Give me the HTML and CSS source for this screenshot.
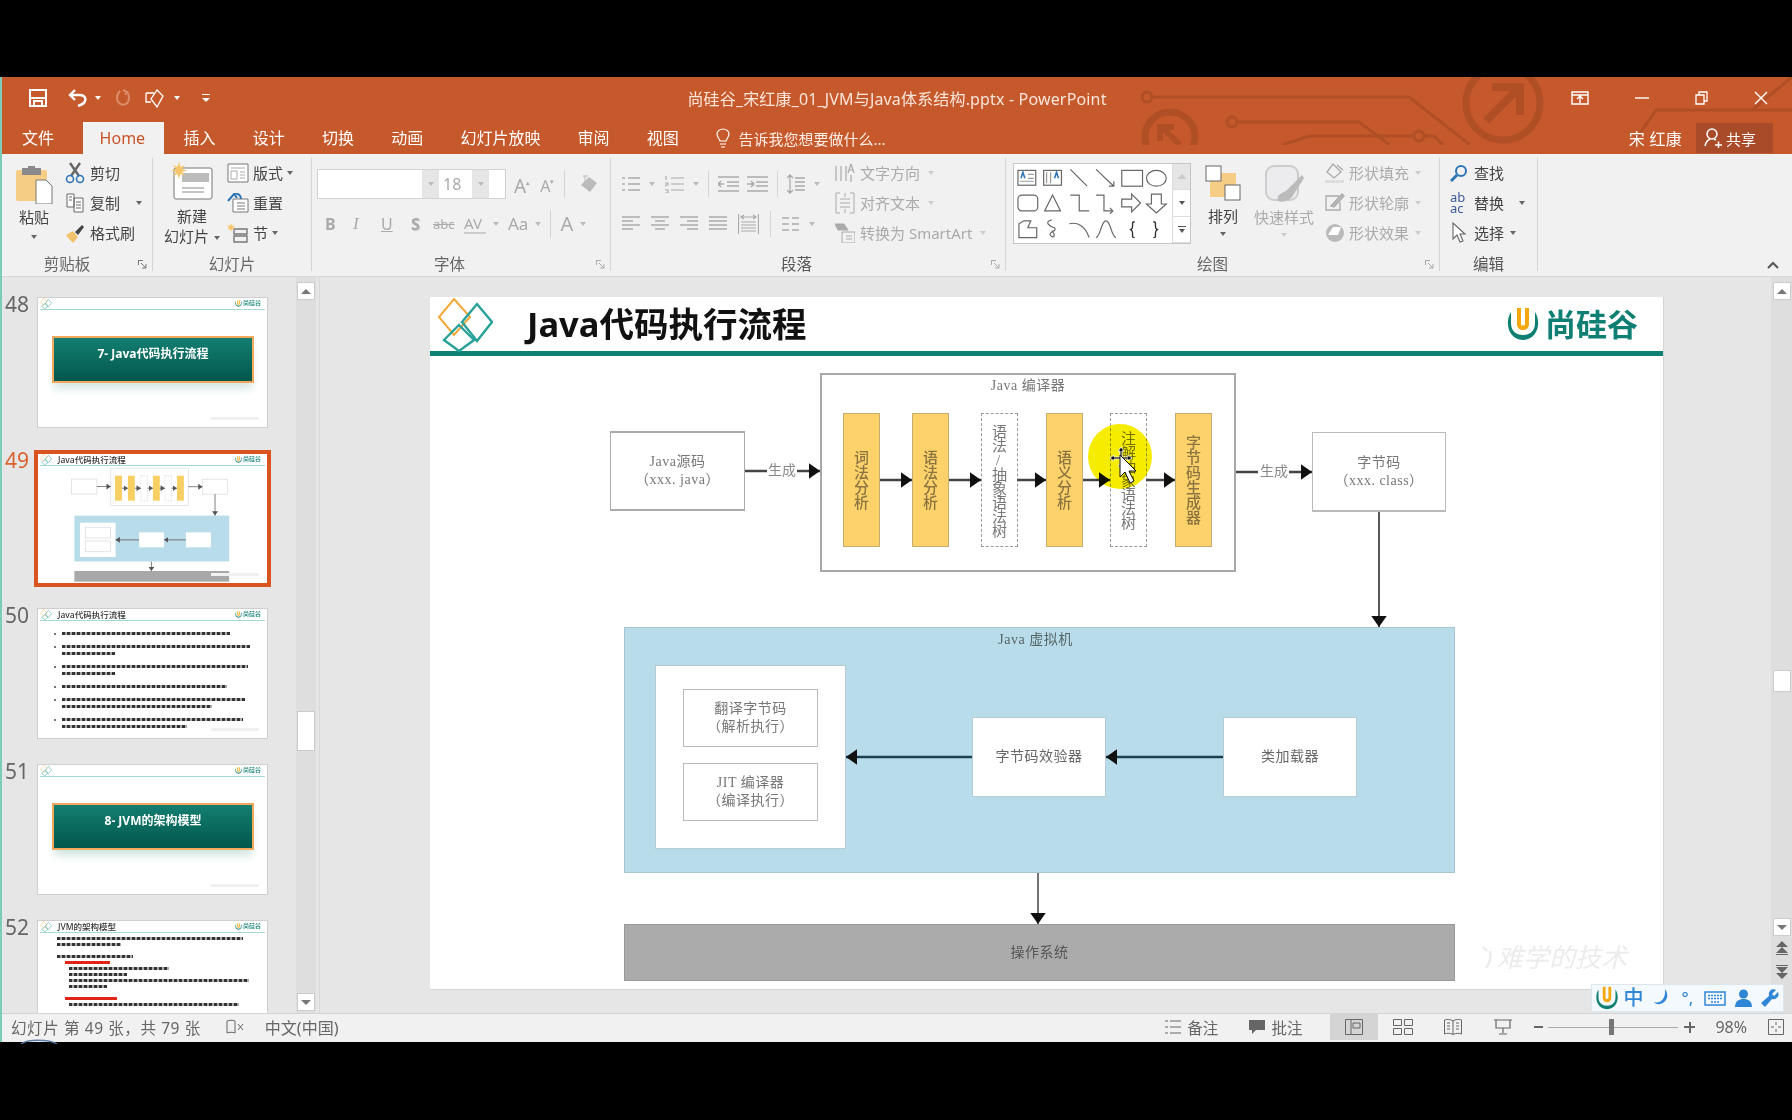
FILE: index.html
```html
<!doctype html>
<html lang="zh-CN">
<head>
<meta charset="utf-8">
<title>尚硅谷_宋红康_01_JVM与Java体系结构.pptx - PowerPoint</title>
<link rel="stylesheet" href="styles.css">
</head>
<body>
<svg class="defs">
	<symbol id="diamonds" viewBox="0 0 56 54">
		<path d="M17 1 L33 19 L17 37 L2 19 Z" fill="none" stroke="#f2a838" stroke-width="2"/>
		<path d="M40 6 L55 24 L40 43 L25 24 Z" fill="none" stroke="#2aa198" stroke-width="2.4"/>
		<path d="M22 27 L37 42 L22 53 L7 42 Z" fill="none" stroke="#2aa198" stroke-width="2.4"/>
	</symbol>
	<symbol id="ulogo" viewBox="0 0 34 34">
		<path d="M5 5 C-1 14 1 32 17 33 C33 32 35 14 29 5 L29 16 C29 24 24 28 17 28 C10 28 5 24 5 16 Z" fill="#0e7f72"/>
		<path d="M11 1 H15 V17 C15 19 19 19 19 17 V1 H23 V17 C23 25 11 25 11 17 Z" fill="#f5a70f"/>
	</symbol>
	<marker id="head" viewBox="0 0 10 14" refX="10" refY="7" markerUnits="userSpaceOnUse" markerWidth="11" markerHeight="16" orient="auto"><path d="M0 0 L10 7 L0 14 Z" fill="#111"/></marker>
	<marker id="mini" viewBox="0 0 10 14" refX="10" refY="7" markerUnits="userSpaceOnUse" markerWidth="24" markerHeight="32" orient="auto"><path d="M0 0 L10 7 L0 14 Z" fill="#555"/></marker>
</svg>

<div class="app">
	<header class="head">
		<svg class="circuit" width="1790" height="68" viewBox="0 0 1790 68" fill="none" stroke="#b04f26" stroke-width="3">
			<circle cx="1145" cy="20" r="5"/><path d="M1150 20 H1407 L1468 68"/>
			<circle cx="1168" cy="60" r="25" stroke-width="7"/><path d="M1178 68 L1160 50 M1158 64 V50 H1172" stroke-width="6"/>
			<circle cx="1230" cy="45" r="5"/><path d="M1235 45 H1357 L1388 68"/>
			<circle cx="1417" cy="59" r="5"/><path d="M1280 68 L1308 59 H1412 M1422 59 H1432 L1441 68"/>
			<circle cx="1501" cy="26" r="37" stroke-width="7"/><path d="M1484 44 L1516 12 M1490 10 H1518 V38" stroke-width="8"/>
			<path d="M1630 68 L1654 33 H1790 M1750 33 L1790 0"/>
		</svg>
		<div class="titlebar">
			<div class="qat">
				<svg class="q-save" width="20" height="20" viewBox="0 0 20 20" fill="none" stroke="#fff" stroke-width="2"><path d="M2 2 H18 V18 H2 Z M2 10 H18 M6 18 V13 H14 V18"/></svg>
				<svg class="q-undo" width="19" height="18" viewBox="0 0 19 18" fill="none" stroke="#fff" stroke-width="2.4"><path d="M7 1 L2 6 L7 11 M2 6 H12 C17 6 18 10 17 12 C16 15 13 16 10 17"/></svg>
				<i class="caret light"></i>
				<svg class="q-redo" width="16" height="18" viewBox="0 0 16 18" fill="none" stroke="#dc8c68" stroke-width="2"><path d="M11 2 C15 5 15 12 11 15 C7 17 2 14 2 9 C2 6 3 4 5 2 M8 1 L12 3 L10 6"/></svg>
				<svg class="q-touch" width="21" height="20" viewBox="0 0 21 20" fill="none" stroke="#fff" stroke-width="1.3"><path d="M1 5 H9 M1 5 V14 H6 M12 2 L18 8 L12 19 L6 11 Z"/></svg>
				<i class="caret light"></i>
				<svg class="q-more" width="8" height="10" viewBox="0 0 8 10" fill="#fff"><path d="M0 1 H8 V2 H0 Z M0 5 H8 L4 9 Z"/></svg>
			</div>
			<div class="doc-title">尚硅谷_宋红康_01_JVM与Java体系结构.pptx - PowerPoint</div>
			<div class="winctl">
				<svg width="18" height="14" viewBox="0 0 18 14" fill="none" stroke="#fff" stroke-width="1.4"><path d="M1 1 H17 V13 H1 Z M1 4 H17 M9 12 V6 M6 8 L9 5 L12 8"/></svg>
				<svg width="14" height="14" viewBox="0 0 14 14" stroke="#fff" stroke-width="1.4"><path d="M0 7 H14"/></svg>
				<svg width="13" height="14" viewBox="0 0 13 14" fill="none" stroke="#fff" stroke-width="1.3"><path d="M1 4 H9 V13 H1 Z M4 4 V1 H12 V10 H9"/></svg>
				<svg width="14" height="14" viewBox="0 0 14 14" stroke="#fff" stroke-width="1.4"><path d="M1 1 L13 13 M13 1 L1 13"/></svg>
			</div>
		</div>
		<nav class="tabs">
			<span class="tab">文件</span>
			<span class="tab tab-on">Home</span>
			<span class="tab">插入</span>
			<span class="tab">设计</span>
			<span class="tab">切换</span>
			<span class="tab">动画</span>
			<span class="tab">幻灯片放映</span>
			<span class="tab">审阅</span>
			<span class="tab">视图</span>
			<span class="tell">
				<svg width="14" height="20" viewBox="0 0 14 20" fill="none" stroke="#fff" stroke-width="1.2"><path d="M4 13 C3 10 1 9 1 6 C1 3 4 1 7 1 C10 1 13 3 13 6 C13 9 11 10 10 13 Z M4 16 H10 M5 19 H9"/></svg>
				告诉我您想要做什么...
			</span>
			<span class="user">宋 红康</span>
			<span class="share">
				<svg width="18" height="20" viewBox="0 0 18 20" fill="none" stroke="#fff" stroke-width="1.5"><circle cx="8" cy="6" r="5"/><path d="M1 18 C2 13 4 12 6 11 M10 11 L12 12 M11 17 H18 M14.5 13.5 V20"/></svg>
				共享
			</span>
		</nav>
	</header>

	<section class="ribbon">
		<div class="group g-clip">
			<div class="group-body">
				<div class="big big-paste">
					<svg width="38" height="38" viewBox="0 0 38 38"><rect x="1" y="4" width="31" height="31" rx="2" fill="#f5cd85"/><rect x="7" y="2" width="19" height="7" fill="#8a8a8a"/><rect x="13" y="0" width="7" height="4" fill="#8a8a8a"/><path d="M21 14 H31 L37 20 V38 H21 Z" fill="#fff" stroke="#777"/></svg>
					<span>粘贴</span><i class="caret"></i>
				</div>
				<div class="stack">
					<div class="item"><svg width="20" height="22" viewBox="0 0 20 22" fill="none"><path d="M5 1 L14 14 M15 1 L6 14" stroke="#666" stroke-width="2.4"/><circle cx="5" cy="17" r="3.5" stroke="#2f75b5" stroke-width="1.6"/><circle cx="15" cy="17" r="3.5" stroke="#2f75b5" stroke-width="1.6"/></svg>剪切</div>
					<div class="item"><svg width="20" height="20" viewBox="0 0 20 20" fill="#fff" stroke="#666"><path d="M2 1 H9 V14 H2 Z M9 5 H18 V19 H9 Z M11 9 H16 M11 12 H16 M11 15 H16 M4 4 H7 M4 7 H7"/></svg>复制<i class="caret c-copy"></i></div>
					<div class="item"><svg width="20" height="20" viewBox="0 0 20 20"><path d="M1 12 L8 8 L13 14 L8 20 C6 18 3 15 1 12 Z" fill="#f2c26a"/><path d="M10 9 L17 2 L19 4 L13 12 Z" fill="#444"/></svg>格式刷</div>
				</div>
			</div>
			<div class="group-label lab-clip">剪贴板<svg class="launch" width="9" height="9" viewBox="0 0 9 9" fill="none" stroke="#777"><path d="M0 .5 H5 M.5 0 V5 M3 3 L8 8 M8 4 V8 H4"/></svg></div>
		</div>

		<div class="group g-slides">
			<div class="group-body">
				<div class="big big-new">
					<svg width="42" height="38" viewBox="0 0 42 38"><rect x="3" y="6" width="38" height="31" rx="2" fill="#fff" stroke="#777"/><rect x="11" y="11" width="27" height="9" fill="#bbb"/><path d="M11 26 H33 M11 30 H33" stroke="#888"/><path d="M8 0 L9.500 5 L14 3 L11 7 L16 8.500 L11 10 L14 14 L9.500 12 L8 17 L6.500 12 L2 14 L5 10 L0 8.500 L5 7 L2 3 L6.500 5 Z" fill="#f5c66a"/></svg>
					<span>新建</span><span>幻灯片 <i class="caret"></i></span>
				</div>
				<div class="stack">
					<div class="item"><svg width="22" height="20" viewBox="0 0 22 20" fill="#fff" stroke="#777"><path d="M1 1 H21 V19 H1 Z"/><path d="M4 5 H18 M4 8 H10 V16 H4 Z M13 9 H18 M13 12 H18 M13 15 H18" stroke="#aaa"/></svg>版式 <i class="caret"></i></div>
					<div class="item"><svg width="22" height="20" viewBox="0 0 22 20" fill="#fff" stroke="#777"><path d="M6 6 H21 V19 H6 Z M10 10 H18 M10 13 H18 M10 16 H18"/><path d="M1 8 L7 1 L10 5 M7 1 C12 0 14 3 14 6" stroke="#2f75b5" stroke-width="2" fill="none"/></svg>重置</div>
					<div class="item"><svg width="22" height="20" viewBox="0 0 22 20" fill="none" stroke="#777"><path d="M7 6 H20 V11 H7 Z M7 13 H20 V19 H7 Z" stroke-width="1.4"/><path d="M4 0 L5 3 L8 2 L6 5 L8 7 L5 6 L4 9 L3 6 L0 7 L2 5 L0 2 L3 3 Z" fill="#f5c66a" stroke="none"/></svg>节 <i class="caret"></i></div>
				</div>
			</div>
			<div class="group-label">幻灯片</div>
		</div>

		<div class="group g-font off">
			<div class="group-body column">
				<div class="font-top">
					<div class="fontbox"><span class="fb-name"></span><span class="fb-drop"><i class="caret"></i></span><span class="fb-size">18</span><span class="fb-drop"><i class="caret"></i></span></div>
					<span class="glyph g-grow">A<sup>▴</sup></span>
					<span class="glyph g-shrink">A<sup>▾</sup></span>
					<i class="vsep"></i>
					<svg class="clear" width="18" height="18" viewBox="0 0 18 18"><path d="M1 10 L9 2 L17 8 L10 17 Z" fill="#bbb"/><path d="M3 1 H8 M5 1 V8" stroke="#bbb" fill="none"/></svg>
				</div>
				<div class="font-row">
					<b>B</b><em>I</em><u>U</u><span class="f-s">S</span><span class="f-abc">abc</span><span class="f-av">AV</span><i class="caret"></i><span class="f-aa">Aa</span><i class="caret"></i><i class="vsep"></i><span class="f-a">A</span><i class="caret"></i>
				</div>
			</div>
			<div class="group-label lab-font">字体<svg class="launch" width="9" height="9" viewBox="0 0 9 9" fill="none" stroke="#aaa"><path d="M0 .5 H5 M.5 0 V5 M3 3 L8 8 M8 4 V8 H4"/></svg></div>
		</div>

		<div class="group g-para off">
			<div class="group-body">
				<div class="para-left">
					<div class="para-row">
						<svg width="18" height="18" viewBox="0 0 18 18" stroke="#aaa" fill="none"><path d="M6 3 H18 M6 9 H18 M6 15 H18 M0 3 H3 M0 9 H3 M0 15 H3" stroke-width="1.4"/></svg><i class="caret"></i>
						<svg class="p-num" width="19" height="18" viewBox="0 0 19 18" stroke="#aaa" fill="none"><path d="M6 3 H19 M6 9 H19 M6 15 H19 M1 1 V5 M0 8 H3 V10 H0 V12 M0 15 H3 V18 H0" stroke-width="1.2"/></svg><i class="caret"></i>
						<i class="vsep"></i>
						<svg width="21" height="18" viewBox="0 0 21 18" stroke="#aaa" fill="none" stroke-width="1.4"><path d="M0 2 H21 M9 7 H21 M9 11 H21 M0 16 H21 M6 9 H1 M3 6 L0 9 L3 12"/></svg>
						<svg class="p-ind" width="21" height="18" viewBox="0 0 21 18" stroke="#aaa" fill="none" stroke-width="1.4"><path d="M0 2 H21 M9 7 H21 M9 11 H21 M0 16 H21 M0 9 H6 M4 6 L7 9 L4 12"/></svg>
						<i class="vsep"></i>
						<svg width="18" height="20" viewBox="0 0 18 20" stroke="#aaa" fill="none" stroke-width="1.3"><path d="M8 4 H18 M8 8 H18 M8 12 H18 M8 16 H18 M3 1 V19 M0 4 L3 1 L6 4 M0 16 L3 19 L6 16"/></svg><i class="caret"></i>
					</div>
					<div class="para-row row-two">
						<svg width="18" height="16" viewBox="0 0 18 16" stroke="#aaa" fill="none" stroke-width="1.4"><path d="M0 1 H18 M0 5 H11 M0 9 H18 M0 13 H11"/></svg>
						<svg width="18" height="16" viewBox="0 0 18 16" stroke="#aaa" fill="none" stroke-width="1.4"><path d="M0 1 H18 M4 5 H14 M0 9 H18 M4 13 H14"/></svg>
						<svg width="18" height="16" viewBox="0 0 18 16" stroke="#aaa" fill="none" stroke-width="1.4"><path d="M0 1 H18 M7 5 H18 M0 9 H18 M7 13 H18"/></svg>
						<svg width="18" height="16" viewBox="0 0 18 16" stroke="#aaa" fill="none" stroke-width="1.4"><path d="M0 1 H18 M0 5 H18 M0 9 H18 M0 13 H18"/></svg>
						<svg width="21" height="22" viewBox="0 0 21 22" stroke="#aaa" fill="none" stroke-width="1.2"><path d="M0.500 1 V21 M20.500 1 V21 M3 9 H18 M3 12 H18 M3 15 H18 M3 18 H18 M4 4 H17 M6 2 L3 4 L6 6 M15 2 L18 4 L15 6"/></svg>
						<i class="vsep"></i>
						<svg width="17" height="14" viewBox="0 0 17 14" stroke="#aaa" fill="none" stroke-width="1.4"><path d="M0 1 H7 M10 1 H17 M0 7 H7 M10 7 H17 M0 13 H7 M10 13 H17"/></svg><i class="caret"></i>
					</div>
				</div>
				<div class="stack para-stack">
					<div class="item"><svg width="20" height="20" viewBox="0 0 20 20" stroke="#aaa" fill="none"><path d="M1 3 V18 M6 3 V18 M11 3 V18 M16 1 L13 10 M16 1 L19 10 M14 7 H18 M16 12 V19" stroke-width="1.2"/></svg>文字方向 <i class="caret"></i></div>
					<div class="item"><svg width="20" height="22" viewBox="0 0 20 22" stroke="#aaa" fill="none"><path d="M5 1 H1 V21 H5 M15 1 H19 V21 H15 M5 7 H15 M5 11 H15 M5 15 H15 M10 1 V5 M10 17 V21"/></svg>对齐文本 <i class="caret"></i></div>
					<div class="item"><svg width="20" height="20" viewBox="0 0 20 20" fill="none" stroke="#aaa"><path d="M0 1 H9 L13 7 H3 Z" fill="#aaa"/><path d="M7 9 H20 V20 H7 Z M11 13 H17 M11 16 H17"/></svg>转换为 SmartArt <i class="caret"></i></div>
				</div>
			</div>
			<div class="group-label dark lab-para">段落<svg class="launch" width="9" height="9" viewBox="0 0 9 9" fill="none" stroke="#aaa"><path d="M0 .5 H5 M.5 0 V5 M3 3 L8 8 M8 4 V8 H4"/></svg></div>
		</div>

		<div class="group g-draw">
			<div class="group-body">
				<div class="gallery">
					<svg width="160" height="80" viewBox="0 0 160 80" fill="none" stroke="#666" stroke-width="1.2">
						<rect x="4" y="6" width="18" height="15"/><path d="M14 10 H20 M14 14 H20 M6 17 H20" stroke="#999"/><path d="M7 14 L9 8 L11 14" stroke="#2f75b5" stroke-width="1.6"/>
						<rect x="30" y="6" width="18" height="15"/><path d="M33 8 V19 M37 8 V19" stroke="#999"/><path d="M41 14 L43 8 L45 14" stroke="#2f75b5" stroke-width="1.6"/>
						<path d="M57 5 L74 22"/><path d="M83 5 L101 22 M101 17 V22 H96"/>
						<rect x="109" y="6" width="21" height="16"/><ellipse cx="144" cy="14" rx="10" ry="8"/>
						<rect x="4" y="31" width="20" height="16" rx="4"/><path d="M39 31 L47 47 H31 Z"/><path d="M57 31 H66 V47 H76"/><path d="M83 31 H91 V47 H100 M97 44 L100 47 L97 50"/>
						<path d="M109 35 H119 V30 L128 39 L119 48 V43 H109 Z"/><path d="M139 30 H149 V40 H154 L144 49 L134 40 H139 Z"/>
						<path d="M5 60 L10 57 H17 L14 64 H23 V74 H5 Z"/><path d="M38 56 C30 58 36 63 41 64 C44 68 34 68 37 72 C40 75 43 72 38 67"/><path d="M56 60 C64 58 72 62 76 74"/><path d="M83 74 C88 72 88 57 93 57 C98 57 98 72 103 74"/>
						<path d="M122 58 C119 58 120 60 120 62 C120 64 120 65 118 66 C120 67 120 68 120 70 C120 72 119 74 122 74" stroke="#333" stroke-width="1.4"/><path d="M141 58 C144 58 143 60 143 62 C143 64 143 65 145 66 C143 67 143 68 143 70 C143 72 144 74 141 74" stroke="#333" stroke-width="1.4"/>
					</svg>
					<div class="gal-scroll">
						<span class="gal-up"><i class="caret up"></i></span>
						<span class="gal-mid"><i class="caret dark"></i></span>
						<span class="gal-more"><b></b><i class="caret dark"></i></span>
					</div>
				</div>
				<div class="big big-arrange">
					<svg width="36" height="36" viewBox="0 0 36 36"><rect x="5" y="8" width="26" height="24" fill="#f5cd85"/><rect x="1" y="1" width="15" height="15" fill="#fff" stroke="#666"/><rect x="20" y="20" width="15" height="15" fill="#fff" stroke="#666"/></svg>
					<span>排列</span><i class="caret"></i>
				</div>
				<div class="big big-quick">
					<svg width="40" height="38" viewBox="0 0 40 38"><rect x="2" y="1" width="32" height="34" rx="8" fill="#ecebed" stroke="#ccc" stroke-width="2"/><path d="M14 36 C12 30 18 28 22 26 L38 10 L40 13 L28 32 C24 36 18 38 14 36 Z" fill="#bbb"/></svg>
					<span>快速样式</span><i class="caret"></i>
				</div>
				<div class="stack shape-stack">
					<div class="item"><svg width="20" height="20" viewBox="0 0 20 20" fill="none" stroke="#aaa" stroke-width="1.3"><path d="M8 1 L16 9 L9 15 L2 9 Z M12 2 L18 7"/><rect x="0" y="17" width="19" height="3" fill="#ddd" stroke="none"/></svg>形状填充 <i class="caret"></i></div>
					<div class="item"><svg width="20" height="20" viewBox="0 0 20 20" fill="none" stroke="#aaa" stroke-width="1.3"><path d="M14 3 H1 V17 H15 V9"/><path d="M6 13 L17 1 L19 3 L9 14 Z" fill="#bbb"/></svg>形状轮廓 <i class="caret"></i></div>
					<div class="item"><svg width="20" height="20" viewBox="0 0 20 20"><circle cx="10" cy="10" r="9" fill="#bbb"/><path d="M3 12 L8 4 H16 L13 12 Z" fill="#fff"/></svg>形状效果 <i class="caret"></i></div>
				</div>
			</div>
			<div class="group-label lab-draw">绘图<svg class="launch" width="9" height="9" viewBox="0 0 9 9" fill="none" stroke="#aaa"><path d="M0 .5 H5 M.5 0 V5 M3 3 L8 8 M8 4 V8 H4"/></svg></div>
		</div>

		<div class="group g-edit">
			<div class="group-body">
				<div class="stack">
					<div class="item"><svg width="18" height="18" viewBox="0 0 18 18" fill="none" stroke="#2f75b5"><circle cx="11" cy="7" r="5" stroke-width="2"/><path d="M7 11 L1 17" stroke-width="3"/></svg>查找</div>
					<div class="item"><span class="ab">ab<br>ac</span>替换<i class="caret c-rep"></i></div>
					<div class="item"><svg width="18" height="22" viewBox="0 0 18 22" fill="#fff" stroke="#666" stroke-width="1.1"><path d="M3 1 V17 L7 13 L10 20 L13 19 L10 12 L15 12 Z"/></svg>选择 <i class="caret"></i></div>
				</div>
			</div>
			<div class="group-label dark">编辑</div>
		</div>
		<svg class="collapse" width="12" height="8" viewBox="0 0 12 8" fill="none" stroke="#555" stroke-width="2"><path d="M1 7 L6 2 L11 7"/></svg>
	</section>

	<main class="workspace">
		<aside class="sidebar">
			<div class="thumbs">
				<div class="thumb-row">
					<span class="num">48</span>
					<div class="thumb">
						<div class="thumb-head"><svg class="t-d"><use href="#diamonds"/></svg><span class="t-title"></span><svg class="t-u"><use href="#ulogo"/></svg><span class="t-brand">尚硅谷</span></div>
						<div class="banner">7- Java代码执行流程</div>
					</div>
				</div>
				<div class="thumb-row row-on">
					<span class="num">49</span>
					<div class="thumb">
						<div class="thumb-head"><svg class="t-d"><use href="#diamonds"/></svg><span class="t-title">Java代码执行流程</span><svg class="t-u"><use href="#ulogo"/></svg><span class="t-brand">尚硅谷</span></div>
						<svg class="mini" width="230" height="119" viewBox="0 64 1233 638">
							<g fill="#fff" stroke="#ddd" stroke-width="4">
								<rect x="180" y="134" width="135" height="80"/><rect x="390" y="76" width="416" height="199"/><rect x="882" y="135" width="134" height="80"/>
							</g>
							<g fill="#f8cf63">
								<rect x="413" y="116" width="37" height="134"/><rect x="482" y="116" width="37" height="134"/><rect x="616" y="116" width="37" height="134"/><rect x="745" y="116" width="37" height="134"/>
							</g>
							<g fill="#fff" stroke="#ccc" stroke-width="3" stroke-dasharray="8 6">
								<rect x="551" y="116" width="36" height="134"/><rect x="680" y="116" width="36" height="134"/>
							</g>
							<rect x="195" y="330" width="830" height="246" fill="#b8dcea"/>
							<g fill="#fff"><rect x="225" y="368" width="191" height="184"/><rect x="542" y="420" width="134" height="80"/><rect x="793" y="420" width="134" height="80"/></g>
							<g fill="#fff" stroke="#ccc" stroke-width="3"><rect x="253" y="392" width="135" height="58"/><rect x="253" y="466" width="135" height="58"/></g>
							<rect x="195" y="627" width="830" height="57" fill="#a8a8a8"/>
							<g stroke="#555" stroke-width="4" fill="none">
								<path d="M315 174 H390" marker-end="url(#mini)"/><path d="M450 183 H482" marker-end="url(#mini)"/><path d="M519 183 H551" marker-end="url(#mini)"/><path d="M587 183 H616" marker-end="url(#mini)"/><path d="M653 183 H680" marker-end="url(#mini)"/><path d="M716 183 H745" marker-end="url(#mini)"/><path d="M806 175 H882" marker-end="url(#mini)"/>
								<path d="M949 215 V330" marker-end="url(#mini)"/><path d="M793 460 H676" marker-end="url(#mini)"/><path d="M542 460 H416" marker-end="url(#mini)"/><path d="M608 576 V627" marker-end="url(#mini)"/>
							</g>
						</svg>
					</div>
				</div>
				<div class="thumb-row">
					<span class="num">50</span>
					<div class="thumb">
						<div class="thumb-head"><svg class="t-d"><use href="#diamonds"/></svg><span class="t-title">Java代码执行流程</span><svg class="t-u"><use href="#ulogo"/></svg><span class="t-brand">尚硅谷</span></div>
						<div class="lines">
							<div class="para"><i class="bar" style="width:168px"></i></div>
							<div class="para"><i class="bar" style="width:188px"></i><i class="bar" style="width:53px"></i></div>
							<div class="para"><i class="bar" style="width:186px"></i><i class="bar" style="width:53px"></i></div>
							<div class="para"><i class="bar" style="width:165px"></i></div>
							<div class="para"><i class="bar" style="width:183px"></i><i class="bar" style="width:150px"></i></div>
							<div class="para"><i class="bar" style="width:181px"></i><i class="bar" style="width:125px"></i></div>
						</div>
					</div>
				</div>
				<div class="thumb-row">
					<span class="num">51</span>
					<div class="thumb">
						<div class="thumb-head"><svg class="t-d"><use href="#diamonds"/></svg><span class="t-title"></span><svg class="t-u"><use href="#ulogo"/></svg><span class="t-brand">尚硅谷</span></div>
						<div class="banner">8- JVM的架构模型</div>
					</div>
				</div>
				<div class="thumb-row">
					<span class="num">52</span>
					<div class="thumb">
						<div class="thumb-head"><svg class="t-d"><use href="#diamonds"/></svg><span class="t-title">JVM的架构模型</span><svg class="t-u"><use href="#ulogo"/></svg><span class="t-brand">尚硅谷</span></div>
						<div class="lines lines-dense">
							<i class="bar" style="width:186px"></i>
							<i class="bar" style="width:64px"></i>
							<i class="bar gap" style="width:76px"></i>
							<i class="bar red" style="width:45px"></i>
							<i class="bar sub" style="width:100px"></i>
							<i class="bar sub" style="width:58px"></i>
							<i class="bar sub" style="width:180px"></i>
							<i class="bar sub" style="width:38px"></i>
							<i class="bar red gap" style="width:52px"></i>
							<i class="bar sub" style="width:170px"></i>
						</div>
					</div>
				</div>
			</div>
			<div class="scroll">
				<span class="scroll-btn"><i class="caret up"></i></span>
				<span class="scroll-thumb left-thumb"></span>
				<span class="scroll-btn btn-end"><i class="caret"></i></span>
			</div>
		</aside>

		<div class="stage">
			<article class="slide">
				<div class="slide-head">
					<svg class="s-d"><use href="#diamonds"/></svg>
					<h1>Java代码执行流程</h1>
					<svg class="s-u"><use href="#ulogo"/></svg>
					<span class="s-brand">尚硅谷</span>
				</div>

				<div class="node n-src">Java源码<br>（xxx. java）</div>
				<div class="node n-comp">Java 编译器</div>
				<div class="node n-jvm">Java 虚拟机</div>

				<div class="node vert fill p1">词法分析</div>
				<div class="node vert fill p2">语法分析</div>
				<div class="node vert dash p3">语法/抽象语法树</div>
				<div class="node vert fill p4">语义分析</div>
				<div class="node vert dash p5">注解抽象语法树</div>
				<div class="node vert fill p6">字节码生成器</div>

				<div class="node n-class">字节码<br>（xxx. class）</div>
				<div class="node n-panel"></div>
				<div class="node n-in1">翻译字节码<br>（解析执行）</div>
				<div class="node n-in2">JIT 编译器<br>（编译执行）</div>
				<div class="node n-ver">字节码效验器</div>
				<div class="node n-load">类加载器</div>
				<div class="node n-os">操作系统</div>

				<span class="gen gen-a">生成</span>
				<span class="gen gen-b">生成</span>

				<svg class="wires" width="1233" height="693" viewBox="0 0 1233 693" fill="none" stroke="#444" stroke-width="2.500">
					<path d="M315 174 H337"/><path d="M367 174 H390" marker-end="url(#head)"/>
					<path d="M450 183 H482" marker-end="url(#head)"/><path d="M519 183 H551" marker-end="url(#head)"/>
					<path d="M587 183 H616" marker-end="url(#head)"/><path d="M653 183 H680" marker-end="url(#head)"/>
					<path d="M716 183 H745" marker-end="url(#head)"/>
					<path d="M806 175 H828"/><path d="M859 175 H882" marker-end="url(#head)"/>
					<path d="M949 215 V330" stroke-width="1.800" marker-end="url(#head)"/>
					<path d="M793 460 H676" stroke="#1f3f52" marker-end="url(#head)"/><path d="M542 460 H416" stroke="#1f3f52" marker-end="url(#head)"/>
					<path d="M608 576 V627" stroke-width="1.500" marker-end="url(#head)"/>
				</svg>

				<svg class="mark-bit" width="10" height="24" viewBox="0 0 10 24" fill="none" stroke="#ececec" stroke-width="2.500"><path d="M1 2 L5 6 M8 6 C9 12 8 18 4 23"/></svg>
				<div class="mark">难学的技术</div>
				<div class="spot"></div>
				<svg class="pointer" width="30" height="40" viewBox="0 0 30 40">
					<path d="M11 0 L14 4 H12 V10 H18 V8 L22 11 L18 14 V12 H12 V18 H14 L11 22 L8 18 H10 V12 H4 V14 L0 11 L4 8 V10 H10 V4 H8 Z" fill="#111" stroke="#fff" stroke-width=".8"/>
					<path d="M10 8 V30 L15 25 L20 36 L24 34 L19 24 L26 24 Z" fill="#fff" stroke="#111"/>
				</svg>
			</article>
		</div>

		<div class="scroll scroll-main">
			<span class="scroll-btn"><i class="caret up"></i></span>
			<span class="scroll-thumb main-thumb"></span>
			<span class="scroll-btn btn-end"><i class="caret"></i></span>
			<svg class="jump" width="12" height="14" viewBox="0 0 12 14" fill="#666"><path d="M6 0 L12 6 H0 Z M6 6 L12 12 H0 Z M0 13 H12 V14 H0 Z"/></svg>
			<svg class="jump" width="12" height="14" viewBox="0 0 12 14" fill="#666"><path d="M0 0 H12 V1 H0 Z M0 2 H12 L6 8 Z M0 8 H12 L6 14 Z"/></svg>
		</div>
	</main>

	<footer class="status">
		<span class="st-page">幻灯片 第 49 张，共 79 张</span>
		<svg class="st-spell" width="18" height="16" viewBox="0 0 18 16" fill="none" stroke="#666"><path d="M9 2 C7 1 3 1 1 2 V14 C3 13 7 13 9 14 M9 2 V14"/><path d="M12 5 L17 11 M17 5 L12 11"/></svg>
		<span class="st-lang">中文(中国)</span>
		<span class="st-right">
			<span class="st-btn"><svg width="16" height="14" viewBox="0 0 16 14" stroke="#666"><path d="M0 1 H3 M5 1 H16 M0 7 H3 M5 7 H16 M0 13 H3 M5 13 H16"/></svg>备注</span>
			<span class="st-btn st-cmt"><svg width="16" height="14" viewBox="0 0 16 14" fill="#666"><path d="M0 0 H16 V10 H7 L3 14 V10 H0 Z"/></svg>批注</span>
			<span class="view view-on"><svg width="18" height="16" viewBox="0 0 18 16" fill="none" stroke="#666"><path d="M.5 .5 H17.500 V15.500 H.5 Z M6 .5 V15.500 M8 4 H15 V9 H8 Z"/></svg></span>
			<span class="view"><svg width="20" height="16" viewBox="0 0 20 16" fill="none" stroke="#666"><path d="M.5 .5 H8.500 V6.500 H.5 Z M11.500 .5 H19.500 V6.500 H11.500 Z M.5 9.500 H8.500 V15.500 H.5 Z M11.500 9.500 H19.500 V15.500 H11.500 Z"/></svg></span>
			<span class="view"><svg width="18" height="16" viewBox="0 0 18 16" fill="none" stroke="#666"><path d="M9 2 C6 0 3 0 .5 1 V15 C3 14 6 14 9 15.500 C12 14 15 14 17.500 15 V1 C15 0 12 0 9 2 Z M9 2 V15 M3 4 H6 M3 7 H6 M3 10 H6 M12 4 H15 M12 7 H15 M12 10 H15"/></svg></span>
			<span class="view"><svg width="18" height="16" viewBox="0 0 18 16" fill="none" stroke="#666" stroke-width="1.2"><path d="M0 1 H18 M2 1 V9 H16 V1 M9 9 V14 M5 15 H13"/></svg></span>
			<span class="zoom-minus"></span>
			<span class="slider"><i></i></span>
			<span class="zoom-plus"></span>
			<span class="st-pct">98%</span>
			<svg width="16" height="16" viewBox="0 0 16 16" fill="none" stroke="#666"><path d="M.5 .5 H15.500 V15.500 H.5 Z M8 3 V6 M8 10 V13 M3 8 H6 M10 8 H13" stroke-width="1"/></svg>
		</span>
	</footer>

	<div class="ime">
		<svg class="ime-u"><use href="#ulogo"/></svg>
		<span class="ime-zh">中</span>
		<svg width="20" height="20" viewBox="0 0 20 20" fill="#2f86d6"><path d="M12 1 C16 6 15 14 7 16 C4 17 2 15 1 14 C8 16 13 10 12 1 Z"/></svg>
		<span class="ime-dot">°,</span>
		<svg width="22" height="15" viewBox="0 0 22 15" fill="none" stroke="#2f86d6" stroke-width="1.500"><rect x="1" y="1" width="20" height="13"/><path d="M4 4.500 H18 M4 7.500 H18 M7 11 H15" stroke-dasharray="2 1"/></svg>
		<svg width="17" height="19" viewBox="0 0 17 19" fill="#2f86d6"><circle cx="8.500" cy="5" r="4.500"/><path d="M0 18 C0 12 4 10 8.500 10 C13 10 17 12 17 18 Z"/></svg>
		<svg width="18" height="18" viewBox="0 0 18 18" fill="#2f86d6"><path d="M17 3 L13 7 L11 5 L15 1 C11 -1 7 2 8 7 L0 14 L4 18 L11 10 C15 11 19 7 17 3 Z"/></svg>
	</div>
	<svg class="arc" width="40" height="6" viewBox="0 0 40 6" fill="none" stroke="#5c7ea8" stroke-width="1.300"><path d="M2 6 C8 1 30 1 38 6"/></svg>
</div>
</body>
</html>
```
FILE: styles.css
```css
* {margin:0; padding:0; box-sizing:border-box;}

html, body {height:100%; overflow:hidden;}
body {background:#000; font-family:"Noto Sans","Noto Sans CJK SC",sans-serif; color:#444;}

.defs {width:0; height:0; display:block;}

.app {position:relative; margin-top:77px; height:965px; width:1792px; border-left:2px solid #7ccdb8; background:#e6e6e6; display:flex; flex-direction:column; filter:blur(.45px);}

/* caret */
.caret {display:inline-block; width:0; height:0; border-left:3.5px solid transparent; border-right:3.5px solid transparent; border-top:4px solid #666; vertical-align:middle;}
.caret.light {border-top-color:#fff;}
.caret.dark {border-top-color:#555;}
.caret.up {border-top:0; border-bottom:5px solid #777; border-left-width:5px; border-right-width:5px;}

/* head */
.head {position:relative; background:#c6592b; color:#fff; height:77px; overflow:hidden;}
.circuit {position:absolute; left:0; top:0;}
.titlebar {position:relative; height:45px; padding-bottom:4px; display:grid; grid-template-columns:1fr auto 1fr; align-items:center;}
.qat {display:flex; align-items:center; padding-left:26px;}
.q-undo {margin-left:20px;}
.qat .caret {margin-left:8px;}
.q-redo {margin-left:14px;}
.q-touch {margin-left:14px;}
.q-more {margin-left:22px;}
.doc-title {font-size:16px; color:#f9e5da; letter-spacing:.16px;}
.winctl {display:flex; justify-content:flex-end; align-items:center; gap:46px; padding-right:24px;}

.tabs {position:relative; height:32px; display:flex; align-items:center; font-size:16px;}
.tab {padding:0 18.6px; line-height:32px; height:32px; color:#fff;}
.tab:first-child {margin-left:1.400px;}
.tab-on {background:#f1f1f1; color:#c8552a; padding:0 17px; width:81px; margin-left:10px; margin-right:1.400px;}
.tell {display:flex; align-items:center; gap:8px; font-size:15px; color:#fdeee6; margin-left:19px;}
.user {margin-left:auto; font-size:16px; margin-right:14px; letter-spacing:.3px;}
.share {display:flex; align-items:center; gap:4px; width:77px; height:30px; margin-right:19px; padding-left:8px; font-size:15px; background:#a94a28;}

/* ribbon */
.ribbon {position:relative; height:123px; background:#f1f1f1; border-bottom:1px solid #d8d8d8; display:flex; padding-top:4px; font-size:15px; line-height:20px;}
.group {display:flex; flex-direction:column; height:113px; border-right:1px solid #d4d4d4;}
.group-body {display:flex; height:96px; flex:none;}
.group-body.column {flex-direction:column;}
.group-label {position:relative; height:17px; line-height:20px; text-align:center; font-size:15.5px; color:#666;}
.group-label.dark {color:#555;}
.lab-clip {padding-right:20px;}
.lab-font {padding-right:23px;}
.lab-para {padding-right:23px;}
.lab-draw {padding-right:20px;}
.launch {position:absolute; right:5px; top:6px;}
.g-clip {width:151px;}
.g-slides {width:159px;}
.g-font {width:299px;}
.g-para {width:395px;}
.g-draw {width:434px;}
.g-edit {width:98px;}

.stack {display:flex; flex-direction:column;}
.item {height:30px; display:flex; align-items:center; gap:5px; white-space:nowrap;}
.big {display:flex; flex-direction:column; align-items:center; line-height:20px; white-space:nowrap;}
.big svg {margin-bottom:3px;}
.big .caret {margin-top:8px;}
.big-paste {width:48px; margin:8px 0 0 8px;}
.big-paste + .stack {margin-left:7px;}
.c-copy {margin-left:11px;}
.big-new {width:64px; margin:4px 0 0 7px;}
.big-new svg {margin-bottom:6px;}
.big-new .caret {margin:0 0 0 1px;}
.big-new + .stack {margin-left:3px;}
.big-new + .stack .item {gap:4px;}

.off, .off .item, .off span {color:#aaa;}
.font-top {display:flex; align-items:center; height:30px; margin:11px 0 0 5px;}
.fontbox {display:flex; width:189px; height:30px; border:1px solid #d2d2d2; background:#fff;}
.fb-name {width:104px;}
.fb-drop {width:17px; background:#e6e6e6; text-align:center; line-height:24px;}
.fb-drop .caret {border-top-color:#bbb;}
.fb-size {width:33px; padding-left:4px; line-height:28px; font-size:16px; color:#999;}
.glyph {position:relative; font-size:19px; line-height:28px;}
.glyph sup {font-size:7px; vertical-align:8px;}
.g-grow {margin-left:8px;}
.g-shrink {margin-left:10px; font-size:16px;}
.vsep {display:inline-block; width:1px; height:28px; background:#d4d4d4; margin:0 10px;}
.clear {margin-left:5px;}
.font-row {display:flex; align-items:center; height:30px; margin:10px 0 0 12px; font-size:16px; color:#aaa;}
.font-row b {width:14px; margin-left:1px; font-weight:700;}
.font-row em {width:14px; margin-left:14px; font-family:"Liberation Serif",serif; font-size:17px;}
.font-row u {width:14px; margin-left:14px;}
.font-row .f-s {width:14px; margin-left:16px; font-weight:700; text-shadow:1px 1px 1px #ccc;}
.f-abc {width:22px; margin-left:8px; font-size:13px; text-decoration:line-through;}
.f-av {width:22px; margin-left:9px; font-size:15px; border-bottom:2px solid #ccc; line-height:17px;}
.font-row .caret {margin-left:7px; border-top-color:#bbb;}
.f-aa {margin-left:9px; font-size:17px;}
.font-row .vsep {margin:0 9px;}
.f-a {font-size:20px;}

.para-left {width:224px; padding:13px 0 0 11px;}
.para-row {display:flex; align-items:center; height:26px;}
.para-row .caret {margin-left:9px; border-top-color:#bbb;}
.p-num {margin-left:10px;}
.p-ind {margin-left:8px;}
.para-row .vsep {margin:0 9px; height:26px;}
.row-two {margin-top:14px; gap:11px;}
.row-two .vsep {margin:0;}
.row-two .caret {margin-left:-1px;}
.para-stack .item .caret {margin-left:3px; border-top-color:#ccc;}

.gallery {display:flex; width:178px; height:81px; margin:5px 0 0 7px; border:1px solid #c6c6c6; background:#fff;}
.gal-scroll {display:flex; flex-direction:column; width:18px; border-left:1px solid #ddd;}
.gal-scroll span {flex:1; display:flex; flex-direction:column; align-items:center; justify-content:center; border-bottom:1px solid #ddd;}
.gal-up {background:#e6e6e6;}
.gal-up .caret {border-bottom-color:#ccc;}
.gal-more b {display:block; width:8px; height:1px; background:#555; margin-bottom:2px;}
.big-arrange {width:38px; margin:7px 0 0 13px;}
.big-quick {width:64px; margin:7px 0 0 10px; color:#aaa;}
.big-quick .caret {border-top-color:#ccc; margin-top:6px;}
.big-quick svg {margin-bottom:4px;}
.big-arrange svg {margin-bottom:5px;}
.big-arrange .caret {margin-top:6px;}
.shape-stack {margin-left:9px; color:#aaa;}
.shape-stack .item {gap:4px;}
.shape-stack .item .caret {margin-left:2px; border-top-color:#ccc;}
.g-edit .stack {margin-left:10px;}
.g-edit .item {gap:6px;}
.ab {display:block; width:18px; font-size:13px; line-height:11px; color:#3c5a9a;}
.c-rep {margin-left:9px;}
.collapse {position:absolute; right:13px; top:107px;}

/* workspace */
.workspace {flex:1; display:flex; height:736px; overflow:hidden; background:#e6e6e6;}
.sidebar {width:318px; display:flex; border-right:1px solid #d8d8d8; margin-right:1px;}
.thumbs {width:292px; padding-top:20px; overflow:hidden;}
.thumb-row {display:flex; height:155.7px;}
.num {width:34px; padding-left:3px; margin-top:-8px; font-size:21px; line-height:30px; color:#666; height:30px;}
.row-on .num {color:#d9622f;}
.thumb {position:relative; width:231px; height:131px; flex:none; margin-left:1px; background:#fff; border:1px solid #cfcfcf; overflow:hidden;}
.row-on .thumb {outline:4px solid #d9541e; outline-offset:-1px; overflow:visible; z-index:1;}
.thumb::after {content:""; position:absolute; right:8px; bottom:7px; width:48px; height:3px; background:#f0f0f0;}
.thumb-head {display:flex; align-items:center; height:12px; margin:0 2px; border-bottom:1px solid #a5d8d0; font-size:8.5px; line-height:11px; font-weight:500; color:#333; white-space:nowrap;}
.t-d {width:12px; height:11px; flex:none;}
.t-title {margin-left:6px;}
.t-u {width:7px; height:7px; margin-left:auto; flex:none;}
.t-brand {margin:0 4px 0 1px; font-size:6px; color:#0e7f72;}
.banner {width:202px; height:47px; margin:26px 0 0 14px; border:2px solid #f2a95c; background:linear-gradient(#137f71,#02564c); box-shadow:0 8px 8px -2px #d5e6e3; color:#fff; font-size:12px; line-height:32px; font-weight:700; text-align:center;}
.mini {display:block;}
.lines {padding:11px 0 0 24px;}
.para {position:relative; margin-bottom:10px;}
.para::before {content:""; position:absolute; left:-8px; top:1px; width:2px; height:2px; background:#777;}
.bar {display:block; height:3px; margin-bottom:4px; background:repeating-linear-gradient(90deg,#333 0,#333 3px,#aaa 3px,#aaa 5px);}
.para .bar:last-child {margin-bottom:0;}
.lines-dense {padding:4px 0 0 19px;}
.lines-dense .bar {margin-bottom:3px;}
.bar.red {background:#e02418; margin-left:8px;}
.bar.sub {margin-left:12px;}
.bar.gap {margin-top:9px;}

.scroll {width:20px; padding-top:5px; display:flex; flex-direction:column; align-items:center; background:#dedede;}
.sidebar .scroll {margin-left:2px;}
.scroll-btn {width:18px; height:18px; flex:none; display:flex; align-items:center; justify-content:center; background:#fff; border:1px solid #ccc;}
.scroll-btn .caret {border-left-width:5px; border-right-width:5px; border-top-width:5px; border-top-color:#777;}
.scroll-btn .caret.up {border-top:0; border-bottom-width:5px;}
.scroll-thumb {display:block; width:18px; flex:none; background:#fff; border:1px solid #ccc;}
.left-thumb {height:40px; margin-top:411px;}
.btn-end {margin-top:auto; margin-bottom:2px;}

.stage {flex:1; padding:20px 0 0 109px;}
.slide {position:relative; width:1234px; height:693px; background:#fff; border:1px solid #d4d4d4; border-width:0 1px 1px 0;}
.slide-head {display:flex; align-items:center; height:59px; border-bottom:5px solid #0e8074; padding-left:7px;}
.s-d {width:56px; height:54px; flex:none; margin-top:2px;}
.slide-head h1 {margin-left:34px; font:700 34.5px/46px "Noto Sans","Noto Sans CJK SC",sans-serif; color:#111; letter-spacing:0;}
.s-u {width:34px; height:34px; margin-left:auto; flex:none;}
.s-brand {margin:0 25px 0 5px; font-size:31px; line-height:40px; font-weight:700; color:#0e7f72;}

/* diagram */
.node {position:absolute; display:flex; align-items:center; justify-content:center; text-align:center; font-size:14px; line-height:18px; letter-spacing:.5px; color:#777; font-family:"Liberation Serif","Noto Sans CJK SC",serif; background:#fff; border:1px solid #aaa;}
.n-src {left:180px; top:134px; width:135px; height:80px; border-width:2px 1px;}
.n-comp {left:390px; top:76px; width:416px; height:199px; align-items:flex-start; padding-top:2px; border:2px solid #a8a8a8;}
.vert {top:116px; width:37px; height:134px; padding-right:3px; writing-mode:vertical-rl; text-orientation:upright; font-size:15px; line-height:20px; letter-spacing:0;}
.fill {background:#fdd26b; border-color:#c5ad72; color:#8a7440; font-weight:500;}
.dash {background:#fff; border:1px dashed #999; letter-spacing:-1px;}
.p1 {left:413px;} .p2 {left:482px;} .p3 {left:551px;} .p4 {left:616px;} .p5 {left:680px;} .p6 {left:745px;}
.n-class {left:882px; top:135px; width:134px; height:80px; border-color:#bbb; border-width:1px 1px 2px;}
.n-jvm {left:194px; top:330px; width:831px; height:246px; align-items:flex-start; background:#b9dcea; border:1px solid #a8c4cf; color:#566; padding:3px 8px 0 0;}
.n-panel {left:225px; top:368px; width:191px; height:184px; border-color:#b6cbd3;}
.n-in1 {left:253px; top:392px; width:135px; height:58px; border-color:#bbb;}
.n-in2 {left:253px; top:466px; width:135px; height:58px; border-color:#bbb;}
.n-ver {left:542px; top:420px; width:134px; height:80px; border-color:#b6cbd3; color:#666;}
.n-load {left:793px; top:420px; width:134px; height:80px; border-color:#b6cbd3; color:#666;}
.n-os {left:194px; top:627px; width:831px; height:57px; background:#ababab; border-color:#999; color:#555;}
.gen {position:absolute; font:14px/18px "Liberation Serif","Noto Sans CJK SC",serif; color:#888;}
.gen-a {left:338px; top:165px;}
.gen-b {left:830px; top:166px;}
.wires {position:absolute; left:0; top:0; pointer-events:none;}
.mark-bit {position:absolute; left:1052px; top:648px;}
.mark {position:absolute; left:1067px; top:644px; font-size:26px; line-height:32px; font-style:italic; color:#ececec; white-space:nowrap;}
.spot {position:absolute; left:658px; top:127px; width:64px; height:65px; border-radius:50%; background:#f5ec00; mix-blend-mode:multiply;}
.pointer {position:absolute; left:680px; top:150px;}

.scroll-main {width:21px;}
.main-thumb {height:22px; margin-top:370px;}
.scroll-main .btn-end {margin-bottom:0;}
.jump {margin-top:10px; flex:none;}
.scroll-main .btn-end + .jump {margin-top:5px;}
.scroll-main .jump:last-child {margin-bottom:34px;}

/* status */
.status {height:29px; padding-bottom:2px; display:flex; align-items:center; background:#f1f1f1; border-top:1px solid #d4d4d4; font-size:15.5px; color:#666; white-space:nowrap;}
.st-page {margin-left:9px; letter-spacing:.6px;}
.st-spell {margin-left:25px;}
.st-lang {margin-left:21px; font-size:16px;}
.st-right {margin-left:auto; display:flex; align-items:center; height:100%; padding-right:8px;}
.st-btn {display:flex; align-items:center; gap:6px;}
.st-cmt {margin-left:31px;}
.view {display:flex; align-items:center; justify-content:center; width:48px; height:100%; margin-left:0;}
.view-on {background:#d4d4d4; margin-left:28px;}
.view:nth-child(4), .view:nth-child(5), .view:nth-child(6) {width:50px;}
.zoom-minus {width:9px; height:2px; margin-left:6px; background:#666;}
.slider {display:block; width:130px; height:16px; margin-left:5px; background:linear-gradient(#aaa,#aaa) center/100% 1px no-repeat;}
.slider i {display:block; width:5px; height:16px; margin-left:61px; background:#777;}
.zoom-plus {width:11px; height:11px; margin-left:6px; background:linear-gradient(#666,#666) center/100% 2px no-repeat,linear-gradient(#666,#666) center/2px 100% no-repeat;}
.st-pct {margin:0 21px 0 20px; font-size:16px;}

/* floating input bar */
.ime {position:absolute; left:1589px; top:907px; width:193px; height:28px; display:flex; align-items:center; gap:9px; padding-left:3px; background:#f4f9fd; border:1px solid #dde6ee;}
.ime-u {width:24px; height:24px; flex:none;}
.ime-zh {font-size:20px; line-height:24px; color:#2f86d6; font-weight:500; margin-left:-4.500px;}
.ime-dot {width:13px; font-size:17px; line-height:20px; color:#2f86d6;}
.arc {position:absolute; left:17px; top:961px;}
```
